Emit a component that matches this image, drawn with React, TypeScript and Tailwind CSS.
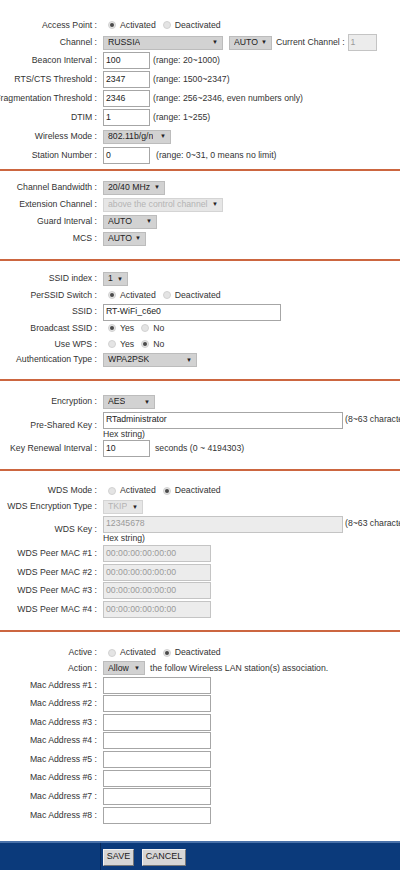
import React from "react";

type RowProps = {
  label: string;
  h: string;
  children?: React.ReactNode;
};

const Row: React.FC<RowProps> = ({ label, h, children }) => (
  <div className={`flex items-center ${h}`}>
    <div className="w-[100px] shrink-0 flex justify-end pr-[3px] whitespace-nowrap">
      {label} :
    </div>
    <div className="flex items-center pl-[3px] whitespace-nowrap">{children}</div>
  </div>
);

const Select: React.FC<{ value: string; w: string; disabled?: boolean }> = ({
  value,
  w,
  disabled,
}) => (
  <span
    className={`inline-flex items-center justify-between h-[14px] pl-[4px] pr-[4px] border overflow-hidden ${w} ${
      disabled
        ? "bg-[#e6e6e6] border-[#d4d4d4] text-[#b4b4b4]"
        : "bg-[#d2d2d2] border-[#bcbcbc] text-[#222]"
    }`}
  >
    <span className="whitespace-nowrap overflow-hidden">{value}</span>
    <span className="text-[6px] text-[#222] ml-[2px] shrink-0">▼</span>
  </span>
);

const Input: React.FC<{ value?: string; w: string; disabled?: boolean }> = ({
  value = "",
  w,
  disabled,
}) => (
  <span
    className={`inline-flex items-center h-[17px] px-[2px] border ${w} ${
      disabled
        ? "bg-[#ececec] border-[#c4c4c4] text-[#9a9a9a]"
        : "bg-white border-[#a6a6a6] text-[#222]"
    }`}
  >
    {value}
  </span>
);

const Radio: React.FC<{ checked?: boolean; label: string }> = ({ checked, label }) => (
  <span className="inline-flex items-center ml-[5px] mr-[2px]">
    <span className="w-[8px] h-[8px] rounded-full bg-[#e4e4e4] border border-[#d2d2d2] flex items-center justify-center">
      {checked && <span className="w-[4px] h-[4px] rounded-full bg-[#4a4a4a]" />}
    </span>
    <span className="ml-[4px]">{label}</span>
  </span>
);

const Divider = () => <div className="h-[2px] bg-[#cc6640]" />;

const Note: React.FC<{ children: React.ReactNode; ml?: string }> = ({ children, ml = "ml-[3px]" }) => (
  <span className={ml}>{children}</span>
);

const KeyRow: React.FC<{ label: string; value: string; disabled?: boolean }> = ({
  label,
  value,
  disabled,
}) => (
  <div className="flex items-center">
    <div className="w-[100px] shrink-0 flex justify-end pr-[3px] whitespace-nowrap">
      {label} :
    </div>
    <div className="flex flex-col pl-[3px]">
      <div className="flex items-center h-[18px] whitespace-nowrap">
        <Input value={value} w="w-[240px]" disabled={disabled} />
        <Note ml="ml-[2px]">(8~63 characters or 64</Note>
      </div>
      <div className="h-[11px] leading-[11px]">Hex string)</div>
    </div>
  </div>
);

export default function App() {
  const macs = [1, 2, 3, 4, 5, 6, 7, 8];
  return (
    <div className="w-[400px] h-[870px] overflow-hidden bg-white flex flex-col text-[8.7px] text-[#333] font-['Liberation_Sans',Arial,sans-serif]">
      {/* basic radio settings */}
      <div className="pt-[17px] pb-[4px]">
        <Row label="Access Point" h="h-[17px]">
          <Radio checked label="Activated" />
          <Radio label="Deactivated" />
        </Row>
        <Row label="Channel" h="h-[17px]">
          <Select value="RUSSIA" w="w-[120px]" />
          <span className="ml-[6px]">
            <Select value="AUTO" w="w-[43px]" />
          </span>
          <span className="ml-[4px]">Current Channel :</span>
          <span className="ml-[3px]">
            <Input value="1" w="w-[29px]" disabled />
          </span>
        </Row>
        <Row label="Beacon Interval" h="h-[19px]">
          <Input value="100" w="w-[47px]" />
          <Note>(range: 20~1000)</Note>
        </Row>
        <Row label="RTS/CTS Threshold" h="h-[19px]">
          <Input value="2347" w="w-[47px]" />
          <Note>(range: 1500~2347)</Note>
        </Row>
        <Row label="Fragmentation Threshold" h="h-[19px]">
          <Input value="2346" w="w-[47px]" />
          <Note>(range: 256~2346, even numbers only)</Note>
        </Row>
        <Row label="DTIM" h="h-[19px]">
          <Input value="1" w="w-[47px]" />
          <Note>(range: 1~255)</Note>
        </Row>
        <Row label="Wireless Mode" h="h-[19px]">
          <Select value="802.11b/g/n" w="w-[68px]" />
        </Row>
        <Row label="Station Number" h="h-[19px]">
          <Input value="0" w="w-[47px]" />
          <Note ml="ml-[6px]">(range: 0~31, 0 means no limit)</Note>
        </Row>
      </div>
      <Divider />

      {/* 11n settings */}
      <div className="pt-[8px] pb-[12px]">
        <Row label="Channel Bandwidth" h="h-[17px]">
          <Select value="20/40 MHz" w="w-[62px]" />
        </Row>
        <Row label="Extension Channel" h="h-[17px]">
          <Select value="above the control channel" w="w-[120px]" disabled />
        </Row>
        <Row label="Guard Interval" h="h-[17px]">
          <Select value="AUTO" w="w-[54px]" />
        </Row>
        <Row label="MCS" h="h-[17px]">
          <Select value="AUTO" w="w-[43px]" />
        </Row>
      </div>
      <Divider />

      {/* ssid */}
      <div className="pt-[10px] pb-[11px]">
        <Row label="SSID index" h="h-[16px]">
          <Select value="1" w="w-[25px]" />
        </Row>
        <Row label="PerSSID Switch" h="h-[17px]">
          <Radio checked label="Activated" />
          <Radio label="Deactivated" />
        </Row>
        <Row label="SSID" h="h-[16px]">
          <Input value="RT-WiFi_c6e0" w="w-[178px]" />
        </Row>
        <Row label="Broadcast SSID" h="h-[17px]">
          <Radio checked label="Yes" />
          <Radio label="No" />
        </Row>
        <Row label="Use WPS" h="h-[15px]">
          <Radio label="Yes" />
          <Radio checked label="No" />
        </Row>
        <Row label="Authentication Type" h="h-[16px]">
          <Select value="WPA2PSK" w="w-[94px]" />
        </Row>
      </div>
      <Divider />

      {/* encryption */}
      <div className="pt-[12px] pb-[12px]">
        <Row label="Encryption" h="h-[18px]">
          <Select value="AES" w="w-[52px]" />
        </Row>
        <KeyRow label="Pre-Shared Key" value="RTadministrator" />
        <Row label="Key Renewal Interval" h="h-[17px]">
          <Input value="10" w="w-[47px]" />
          <Note ml="ml-[5px]">seconds (0 ~ 4194303)</Note>
        </Row>
      </div>
      <Divider />

      {/* wds */}
      <div className="pt-[12px] pb-[11px]">
        <Row label="WDS Mode" h="h-[16px]">
          <Radio label="Activated" />
          <Radio checked label="Deactivated" />
        </Row>
        <Row label="WDS Encryption Type" h="h-[16px]">
          <Select value="TKIP" w="w-[40px]" disabled />
        </Row>
        <KeyRow label="WDS Key" value="12345678" disabled />
        {[1, 2, 3, 4].map((n) => (
          <Row key={n} label={`WDS Peer MAC #${n}`} h="h-[18.7px]">
            <Input value="00:00:00:00:00:00" w="w-[108px]" disabled />
          </Row>
        ))}
      </div>
      <Divider />

      {/* access control list */}
      <div className="pt-[13px] pb-[16px]">
        <Row label="Active" h="h-[16px]">
          <Radio label="Activated" />
          <Radio checked label="Deactivated" />
        </Row>
        <Row label="Action" h="h-[15px]">
          <Select value="Allow" w="w-[42px]" />
          <Note ml="ml-[5px]">the follow Wireless LAN station(s) association.</Note>
        </Row>
        {macs.map((n) => (
          <Row key={n} label={`Mac Address #${n}`} h="h-[18.6px]">
            <Input w="w-[108px]" />
          </Row>
        ))}
      </div>

      <div className="flex-1 flex bg-[#0b3a7b] border-t-2 border-[#4a72aa]">
        <div className="w-[101px] border-r border-[#06295c]" />
        <div className="flex items-start pt-[6px] pl-[2px] gap-[8px]">
          <button className="h-[17px] w-[31px] bg-[#d6d6d6] border border-t-[#f2f2f2] border-l-[#f2f2f2] border-r-[#777] border-b-[#777] text-[#222] text-[9px]">
            SAVE
          </button>
          <button className="h-[17px] w-[44px] bg-[#d6d6d6] border border-t-[#f2f2f2] border-l-[#f2f2f2] border-r-[#777] border-b-[#777] text-[#222] text-[9px]">
            CANCEL
          </button>
        </div>
      </div>
    </div>
  );
}
